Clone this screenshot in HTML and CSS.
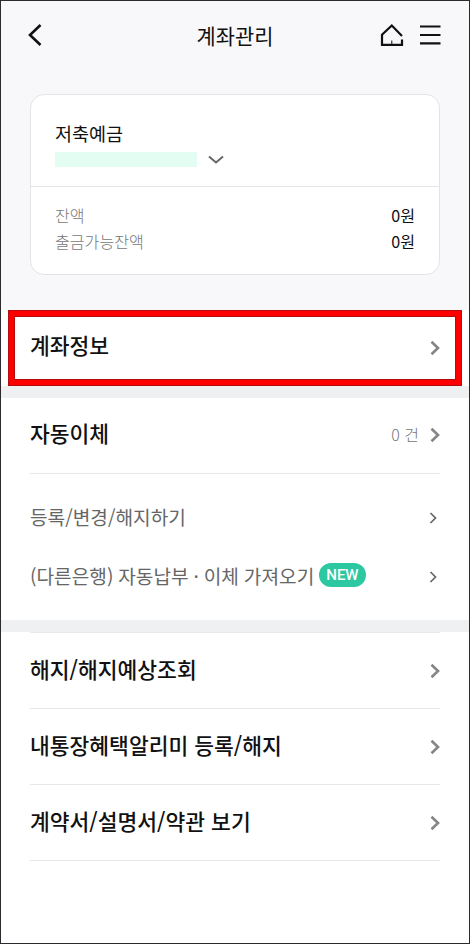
FILE: index.html
```html
<!DOCTYPE html>
<html lang="ko">
<head>
  <meta charset="utf-8" />
  <title>계좌관리</title>
  <link rel="stylesheet" href="styles.css">
</head>
<body>

<div class="page">
  <div class="top">
    <header class="header">
      <svg class="back" width="16" height="24" viewBox="0 0 16 24"><path d="M13.5 2 L3 12 L13.5 22" /></svg>
      <h1>계좌관리</h1>
      <div class="tools">
        <svg width="24" height="24" viewBox="0 0 24 24"><path d="M22 13 L11.8 2.5 L2 11.8 V21.8 H22 V16.5" /><path class="door" d="M11.8 17.5 V21" /></svg>
        <svg width="22" height="24" viewBox="0 0 22 24"><path d="M1 3.5 H21.5 M1 12 H21.5 M1 20.3 H21.5" /></svg>
      </div>
    </header>

    <section class="card">
      <div class="account">
        <h2>저축예금</h2>
        <div class="number">
          <span class="mask"></span>
          <svg width="16" height="10" viewBox="0 0 16 10"><path d="M1 2.5 L8 8.5 L15 2.5" /></svg>
        </div>
      </div>
      <dl class="balance">
        <dt>잔액</dt><dd>0원</dd>
        <dt>출금가능잔액</dt><dd>0원</dd>
      </dl>
    </section>
  </div>

  <a class="row info">
    <span>계좌정보</span>
    <svg class="arrow" width="10" height="16" viewBox="0 0 10 16"><path d="M1.5 1.8 L8 8 L1.5 14.2" /></svg>
    <i class="highlight"></i>
  </a>

  <section class="transfer">
    <a class="row line">
      <span>자동이체</span>
      <em>0 건</em>
      <svg class="arrow" width="10" height="16" viewBox="0 0 10 16"><path d="M1.5 1.8 L8 8 L1.5 14.2" /></svg>
    </a>
    <div class="sub">
      <a class="subrow">
        <span>등록/변경/해지하기</span>
        <svg class="arrow small" width="8" height="12" viewBox="0 0 8 12"><path d="M1.5 1 L6.5 6 L1.5 11" /></svg>
      </a>
      <a class="subrow">
        <span>(다른은행) 자동납부 · 이체 가져오기</span>
        <b class="new">NEW</b>
        <svg class="arrow small" width="8" height="12" viewBox="0 0 8 12"><path d="M1.5 1 L6.5 6 L1.5 11" /></svg>
      </a>
    </div>
  </section>

  <section class="menu">
    <a class="row line">
      <span>해지/해지예상조회</span>
      <svg class="arrow" width="10" height="16" viewBox="0 0 10 16"><path d="M1.5 1.8 L8 8 L1.5 14.2" /></svg>
    </a>
    <a class="row line">
      <span>내통장혜택알리미 등록/해지</span>
      <svg class="arrow" width="10" height="16" viewBox="0 0 10 16"><path d="M1.5 1.8 L8 8 L1.5 14.2" /></svg>
    </a>
    <a class="row line">
      <span>계약서/설명서/약관 보기</span>
      <svg class="arrow" width="10" height="16" viewBox="0 0 10 16"><path d="M1.5 1.8 L8 8 L1.5 14.2" /></svg>
    </a>
  </section>
</div>

</body>
</html>
```
FILE: styles.css
```css
* {
  box-sizing: border-box;
}

body {
  margin: 0;
  font-family: "Noto Sans CJK KR", sans-serif;
  color: #111;
}

h1, h2, dl, dd {
  margin: 0;
  font-weight: 400;
}

svg {
  display: block;
  flex: none;
  fill: none;
  stroke: #111;
  stroke-width: 2.2;
}

.page {
  height: 944px;
  border: 1px solid #2c2a2e;
  background-color: #fff;
  overflow: hidden;
}

.top {
  height: 309px;
  padding: 0 29px;
  background-color: #f8f8fb;
}

.header {
  display: grid;
  grid-template-columns: 1fr auto 1fr;
  align-items: center;
  height: 68px;
  margin-bottom: 25px;
}

.back {
  margin-left: -3px;
  stroke-width: 2.6;
}

.header h1 {
  font-size: 20.9px;
  line-height: 30px;
}

.tools {
  display: flex;
  justify-content: flex-end;
  gap: 15px;
  margin-right: -1px;
}

.tools .door {
  stroke-width: 1;
}

.card {
  height: 181px;
  border: 1px solid #e3e4e7;
  border-radius: 14px;
  background-color: #fff;
}

.account {
  height: 92px;
  padding: 25px 24px 0;
  border-bottom: 1px solid #e3e4e7;
}

.account h2 {
  font-size: 18.5px;
  line-height: 26px;
}

.number {
  display: flex;
  align-items: center;
  gap: 11px;
  height: 26px;
}

.number svg {
  stroke: #666;
  stroke-width: 2;
}

.mask {
  width: 142px;
  height: 15px;
  background-color: #e4fdf3;
}

.balance {
  display: grid;
  grid-template-columns: 1fr auto;
  padding: 15px 24px 0;
  font-size: 16.1px;
  line-height: 26px;
}

.balance dt {
  color: #777;
  font-weight: 300;
}

.row {
  display: flex;
  align-items: center;
  height: 76px;
  font-size: 21.5px;
  font-weight: 500;
}

.row span {
  flex: 1;
  padding-bottom: 4px;
}

.row em {
  margin-right: 11px;
  padding-bottom: 3px;
  color: #777;
  font-size: 16px;
  font-style: normal;
  font-weight: 300;
}

.arrow {
  stroke: #858585;
  stroke-width: 2.6;
}

.line {
  border-bottom: 1px solid #e6e7e9;
}

.info {
  position: relative;
  padding: 0 29px;
}

.info span {
  padding-bottom: 8px;
}

.highlight {
  position: absolute;
  inset: 0 7px;
  border: 7px solid #fe0000;
  outline: 1px solid #b30d0d;
  outline-offset: -1px;
}

.highlight::after {
  content: "";
  position: absolute;
  inset: -1px;
  border: 1px solid #b30d0d;
}

.transfer {
  box-sizing: content-box;
  height: 222px;
  padding: 0 29px;
  border: solid #eff0f2;
  border-width: 12px 0;
}

.transfer .row {
  padding-bottom: 1px;
}

.transfer .row span {
  padding-bottom: 5px;
}

.sub {
  padding-top: 14px;
}

.subrow {
  display: flex;
  align-items: center;
  height: 59px;
  padding-right: 3px;
  color: #666;
  font-size: 19.15px;
  word-spacing: -0.5px;
}

.subrow span {
  padding-bottom: 1px;
}

.new {
  height: 24px;
  margin: 0 0 3px 5px;
  padding: 0 7px;
  border-radius: 12px;
  background-color: #2bc8a2;
  color: #fff;
  font: 500 15px/25px Roboto, sans-serif;
}

.small {
  margin-left: auto;
  stroke: #666;
  stroke-width: 1.7;
}

.menu {
  padding: 0 29px;
}

.menu .row:first-child {
  height: 77px;
  border-top: 1px solid #e9eaec;
}
```
